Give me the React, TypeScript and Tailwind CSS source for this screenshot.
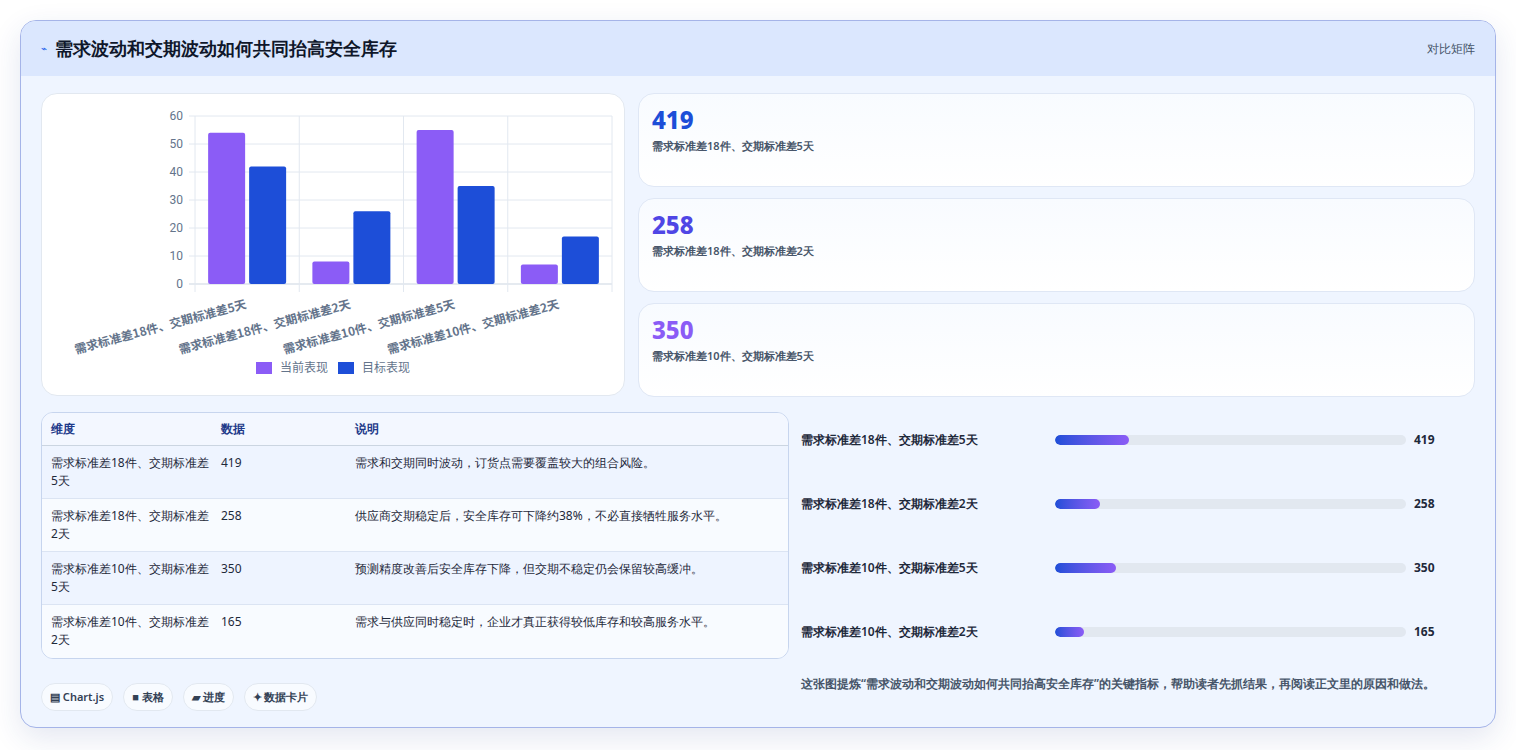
import React from 'react';

const rows = [
  { label: '需求标准差18件、交期标准差5天', value: 419, cur: 54, tgt: 42, note: '需求和交期同时波动，订货点需要覆盖较大的组合风险。' },
  { label: '需求标准差18件、交期标准差2天', value: 258, cur: 8, tgt: 26, note: '供应商交期稳定后，安全库存可下降约38%，不必直接牺牲服务水平。' },
  { label: '需求标准差10件、交期标准差5天', value: 350, cur: 55, tgt: 35, note: '预测精度改善后安全库存下降，但交期不稳定仍会保留较高缓冲。' },
  { label: '需求标准差10件、交期标准差2天', value: 165, cur: 7, tgt: 17, note: '需求与供应同时稳定时，企业才真正获得较低库存和较高服务水平。' },
];

const statColors = ['text-[#1d4ed8]', 'text-[#4f46e5]', 'text-[#8b5cf6]'];

const Chart = () => {
  const left = 153, right = 570, top = 22, bottom = 190;
  const catW = (right - left) / 4;
  const y = (v: number) => bottom - (v / 60) * (bottom - top);
  return (
    <svg width="584" height="303" viewBox="0 0 584 303">
      {[0, 10, 20, 30, 40, 50, 60].map(v => (
        <g key={v}>
          <line x1={left - 6} x2={right} y1={y(v)} y2={y(v)} stroke={v === 0 ? '#cbd5e1' : '#e2e8f0'} />
          <text x={left - 12} y={y(v) + 4} textAnchor="end" fontSize="12" fill="#64748b" fontFamily="Roboto, sans-serif">{v}</text>
        </g>
      ))}
      {[0, 1, 2, 3, 4].map(i => (
        <line key={i} x1={left + i * catW} x2={left + i * catW} y1={top} y2={bottom + 8} stroke="#e2e8f0" />
      ))}
      {rows.map((r, i) => {
        const cx = left + i * catW + catW / 2;
        return (
          <g key={i}>
            <rect x={cx - 39} y={y(r.cur)} width="37" height={bottom - y(r.cur)} rx="2" fill="#8b5cf6" />
            <rect x={cx + 2} y={y(r.tgt)} width="37" height={bottom - y(r.tgt)} rx="2" fill="#1d4ed8" />
            <text x={cx} y={214} textAnchor="end" fontSize="12" fontWeight="600" fill="#64748b" transform={`rotate(-15 ${cx} 214)`} fontFamily="'Noto Sans CJK SC', sans-serif">{r.label}</text>
          </g>
        );
      })}
      <rect x="214" y="268" width="16" height="12" fill="#8b5cf6" />
      <text x="238" y="278" fontSize="12" fill="#64748b" fontFamily="'Noto Sans CJK SC', sans-serif">当前表现</text>
      <rect x="296" y="268" width="16" height="12" fill="#1d4ed8" />
      <text x="320" y="278" fontSize="12" fill="#64748b" fontFamily="'Noto Sans CJK SC', sans-serif">目标表现</text>
    </svg>
  );
};

export default function App() {
  return (
    <div className="min-h-screen bg-white p-5 font-['Noto_Sans_CJK_SC',sans-serif]">
      <div className="w-[1476px] h-[708px] rounded-2xl border border-[#a5b4e8] bg-[#eff5ff] overflow-hidden shadow-[0_10px_30px_rgba(30,58,138,0.12)]">
        <div className="h-[55px] bg-[#dbe7fe] flex items-center justify-between px-5">
          <div className="flex items-center gap-2">
            <span className="text-[10px] text-[#2563eb]">⌁</span>
            <h1 className="text-[18px] font-bold text-[#0f172a]">需求波动和交期波动如何共同抬高安全库存</h1>
          </div>
          <span className="text-[12px] text-[#475569]">对比矩阵</span>
        </div>
        <div className="px-5 pt-[17px]">
          <div className="flex gap-[13px]">
            <div className="w-[584px] h-[303px] rounded-2xl bg-white border border-[#e2e8f0]">
              <Chart />
            </div>
            <div className="flex-1 flex flex-col gap-[11px]">
              {rows.slice(0, 3).map((r, i) => (
                <div key={i} className="h-[94px] rounded-2xl border border-[#dfe7f5] bg-gradient-to-b from-[#f8fbff] to-white px-[13px] pt-[10px]">
                  <div className={`text-[24px] font-extrabold leading-[32px] ${statColors[i]}`}>{r.value}</div>
                  <div className="text-[11px] font-semibold text-[#475569] mt-[2px]">{r.label}</div>
                </div>
              ))}
            </div>
          </div>
          <div className="flex gap-3 mt-[15px]">
            <div className="w-[748px]">
              <div className="rounded-xl border border-[#c7d5ee] overflow-hidden text-[12px]">
                <div className="flex h-[33px] items-center bg-[#f3f7ff] border-b border-[#cbd5e1] text-[#1e3a8a] font-semibold">
                  <div className="w-[179px] pl-[9px]">维度</div>
                  <div className="w-[134px]">数据</div>
                  <div className="flex-1">说明</div>
                </div>
                {rows.map((r, i) => (
                  <div key={i} className={`flex h-[53px] pt-[8px] text-[#1e293b] leading-[18px] ${i % 2 === 0 ? 'bg-[#eef4ff]' : 'bg-[#f8fbff]'} ${i < 3 ? 'border-b border-[#dbe4f3]' : ''}`}>
                    <div className="w-[179px] pl-[9px] pr-2">{r.label}</div>
                    <div className="w-[134px]">{r.value}</div>
                    <div className="flex-1">{r.note}</div>
                  </div>
                ))}
              </div>
              <div className="flex gap-[10px] mt-[24px] text-[11px] font-semibold text-[#334155]">
                {['▤ Chart.js', '■ 表格', '▰ 进度', '✦ 数据卡片'].map(c => (
                  <span key={c} className="h-[28px] px-[8px] flex items-center rounded-full bg-[#f8fbff] border border-[#e2e8f0]">{c}</span>
                ))}
              </div>
            </div>
            <div className="flex-1">
              <div className="flex flex-col gap-[46px] pt-[19px]">
                {rows.map((r, i) => (
                  <div key={i} className="flex items-center h-[18px] text-[12px]">
                    <div className="w-[254px] font-semibold text-[#1e293b]">{r.label}</div>
                    <div className="w-[351px] h-[10px] rounded-full bg-[#e2e8f0] overflow-hidden">
                      <div className="h-full rounded-full bg-gradient-to-r from-[#1d4ed8] to-[#8b5cf6]" style={{ width: `${(r.value / 2000) * 100}%` }} />
                    </div>
                    <div className="ml-2 font-bold text-[#1e293b]">{r.value}</div>
                  </div>
                ))}
              </div>
              <p className="mt-[32px] text-[12px] font-semibold leading-[21px] text-[#475569] pr-2">这张图提炼“需求波动和交期波动如何共同抬高安全库存”的关键指标，帮助读者先抓结果，再阅读正文里的原因和做法。</p>
            </div>
          </div>
        </div>
      </div>
    </div>
  );
}
